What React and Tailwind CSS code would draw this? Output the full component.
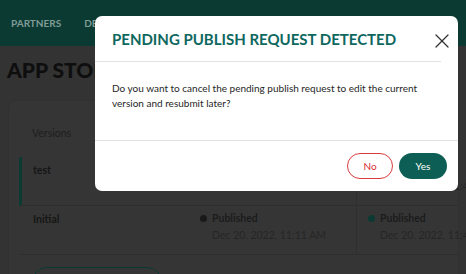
import { X } from 'lucide-react';

function Dot({ className }) {
  return <span className={`inline-block w-[7px] h-[7px] rounded-full ${className}`} />;
}

function VersionRow({ name, active, cols }) {
  return (
    <div className={`flex h-[49px] border-b border-[#2e2e2e] ${active ? 'border-l-[3px] border-l-[#0b3b31] pl-[11px]' : 'pl-[14px]'}`}>
      <div className="w-[167px] shrink-0 pt-[6px] text-[10.5px] leading-[15px] font-bold text-[#161616]">{name}</div>
      {cols.map((c, i) => (
        <div key={i} className={`shrink-0 pt-[4px] text-[10.5px] leading-[17px] ${i === 1 ? 'w-[155px] border-l border-[#2f2f2f] pl-[11px]' : 'w-[156px]'}`}>
          <div className="flex items-center gap-[5px] font-bold text-[#1c1c1c]">
            <Dot className={c.dot} />
            <span>Published</span>
          </div>
          <div className="pl-[12px] text-[#262626] whitespace-nowrap">{c.date}</div>
        </div>
      ))}
    </div>
  );
}

export default function App() {
  return (
    <div className="relative w-[466px] h-[274px] overflow-hidden bg-[#333333] font-['Lato',sans-serif]">
      <header className="h-[46px] bg-[#0b3a33] flex items-center px-[11px] gap-[23px] text-[10px] font-bold text-[#7f9c96]">
        <span>PARTNERS</span>
        <span>DEVELOPERS</span>
      </header>

      <main className="px-[7px]">
        <h1 className="pt-[11px] text-[21px] leading-[26px] font-black text-[#0e0e0e] whitespace-nowrap">APP STORE</h1>
        <section className="mt-[17px] ml-[1px] rounded-t-[8px] bg-[#353535] border border-[#313131] pl-[10px]">
          <div className="h-[56px] pl-[13px] pt-[25px] text-[10.5px] leading-[15px] text-[#1e1e1e]">Versions</div>
          <VersionRow
            name="test"
            active
            cols={[
              { dot: 'bg-[#191919]', date: 'Dec 20, 2022, 11:11 AM' },
              { dot: 'bg-[#0a3a32]', date: 'Dec 20, 2022, 11:41 AM' },
            ]}
          />
          <VersionRow
            name="Initial"
            cols={[
              { dot: 'bg-[#191919]', date: 'Dec 20, 2022, 11:11 AM' },
              { dot: 'bg-[#0a3a32]', date: 'Dec 20, 2022, 11:41 AM' },
            ]}
          />
          <div className="pt-[12px] pl-[13px]">
            <div className="w-[130px] h-[30px] rounded-full border border-[#0b3a31]" />
          </div>
        </section>
      </main>

      <div className="absolute left-[95px] top-[16px] w-[363px] h-[175px] bg-white rounded-[7px] flex flex-col">
        <div className="h-[46px] flex items-center pl-[17px] border-b border-[#e2e2e2] mr-[17px]">
          <h2 className="text-[15px] font-bold text-[#0e675e] leading-none pt-[2px] whitespace-nowrap">PENDING PUBLISH REQUEST DETECTED</h2>
        </div>
        <button className="absolute right-[4px] top-[13px] text-[#333]">
          <X size={24} strokeWidth={1.3} />
        </button>
        <div className="h-[79px] border-b border-[#e2e2e2] pl-[17px] pr-[20px] pt-[19px] text-[10px] leading-[15px] text-[#262626]">
          Do you want to cancel the pending publish request to edit the current version and resubmit later?
        </div>
        <div className="flex-1 flex items-center justify-end gap-[6px] pr-[11px]">
          <button className="w-[46px] h-[26px] rounded-full border border-[#db3a3c] text-[10px] text-[#d42f32]">No</button>
          <button className="w-[48px] h-[26px] rounded-full bg-[#0d5f55] text-[10px] text-white">Yes</button>
        </div>
      </div>
    </div>
  );
}
